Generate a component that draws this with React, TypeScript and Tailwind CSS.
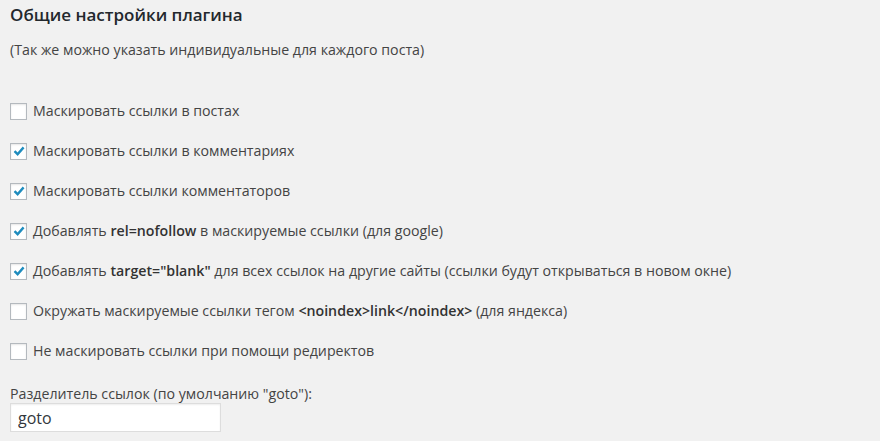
import React from 'react';

type Option = { checked: boolean; label: React.ReactNode };

const options: Option[] = [
  { checked: false, label: 'Маскировать ссылки в постах' },
  { checked: true, label: 'Маскировать ссылки в комментариях' },
  { checked: true, label: 'Маскировать ссылки комментаторов' },
  {
    checked: true,
    label: (
      <>
        Добавлять <b className="font-semibold text-[#333]">rel=nofollow</b> в маскируемые ссылки (для google)
      </>
    ),
  },
  {
    checked: true,
    label: (
      <>
        Добавлять <b className="font-semibold text-[#333]">target="blank"</b> для всех ссылок на другие сайты (ссылки будут открываться в новом окне)
      </>
    ),
  },
  {
    checked: false,
    label: (
      <>
        Окружать маскируемые ссылки тегом <b className="font-semibold text-[#333]">&lt;noindex&gt;link&lt;/noindex&gt;</b> (для яндекса)
      </>
    ),
  },
  { checked: false, label: 'Не маскировать ссылки при помощи редиректов' },
];

function Checkbox({ checked }: { checked: boolean }) {
  return (
    <span className="w-[17px] h-[17px] shrink-0 bg-white border border-[#b4b9be] shadow-[inset_0_1px_2px_rgba(0,0,0,0.1)] flex items-center justify-center">
      {checked && (
        <svg width="14" height="14" viewBox="0 0 14 14">
          <path d="M2.5 7.2 L5.6 10.2 L11.6 3.4" fill="none" stroke="#1e8cbe" strokeWidth="2.4" />
        </svg>
      )}
    </span>
  );
}

export default function App() {
  return (
    <div className="w-[880px] h-[441px] bg-[#f1f1f1] overflow-hidden text-[#444] font-['Open_Sans',sans-serif] text-[14.2px] px-[10px]">
      <h2 className="text-[17px] font-semibold text-[#23282d] pt-[2px] leading-[26px]">Общие настройки плагина</h2>
      <p className="mt-[10px] leading-[24px]">(Так же можно указать индивидуальные для каждого поста)</p>

      <div className="mt-[40px] flex flex-col gap-[22px]">
        {options.map((o, i) => (
          <label key={i} className="flex items-center gap-[6px] h-[18px] leading-[18px] whitespace-nowrap">
            <Checkbox checked={o.checked} />
            <span>{o.label}</span>
          </label>
        ))}
      </div>

      <div className="mt-[25px] leading-[18px]">Разделитель ссылок (по умолчанию "goto"):</div>
      <input
        readOnly
        value="goto"
        className="w-[211px] h-[29px] bg-white border border-[#ddd] shadow-[inset_0_1px_2px_rgba(0,0,0,0.07)] px-[7px] text-[16px] text-[#32373c] outline-none"
      />
    </div>
  );
}
